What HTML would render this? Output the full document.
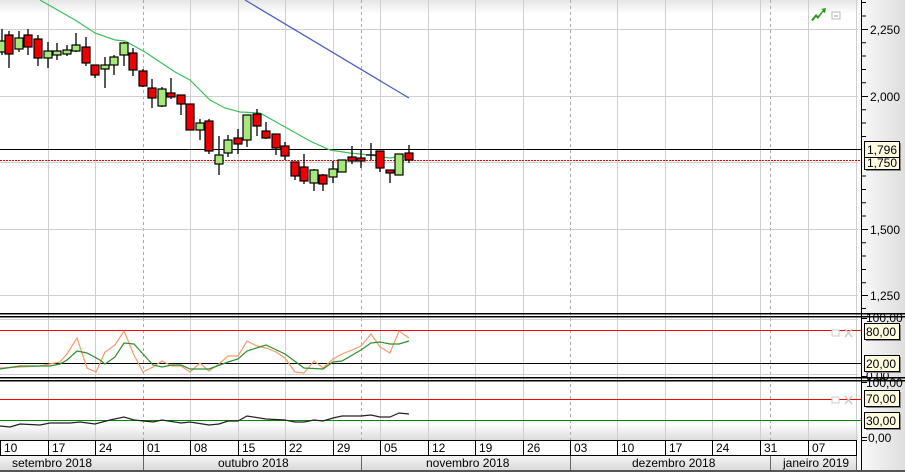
<!DOCTYPE html>
<html><head><meta charset="utf-8"><style>
html,body{margin:0;padding:0;background:#fff;width:905px;height:472px;overflow:hidden}
svg{display:block;font-family:"Liberation Sans",sans-serif}
</style></head><body>
<svg width="905" height="472" viewBox="0 0 905 472" xmlns="http://www.w3.org/2000/svg">
<defs>
<linearGradient id="tg" x1="0" y1="0" x2="0" y2="1"><stop offset="0" stop-color="#e6e6e6"/><stop offset="1" stop-color="#fff"/></linearGradient>
<linearGradient id="bg" x1="0" y1="0" x2="0" y2="1"><stop offset="0" stop-color="#fff"/><stop offset="1" stop-color="#dcdcdc"/></linearGradient>
<linearGradient id="ag" x1="0" y1="0" x2="1" y2="0"><stop offset="0" stop-color="#fafafa"/><stop offset="1" stop-color="#dedede"/></linearGradient>
<linearGradient id="mg" x1="0" y1="0" x2="0" y2="1"><stop offset="0" stop-color="#f4f4f4"/><stop offset="1" stop-color="#dadada"/></linearGradient>
</defs>
<rect x="0" y="0" width="905" height="472" fill="#fff"/>
<rect x="0" y="0" width="858" height="14" fill="url(#tg)"/>
<rect x="0" y="424" width="858" height="16" fill="url(#bg)"/>
<rect x="858" y="0" width="47" height="472" fill="url(#ag)"/>
<g stroke="#cfcfcf" stroke-width="1">
<line x1="48.5" y1="0" x2="48.5" y2="440"/><line x1="95.5" y1="0" x2="95.5" y2="440"/>
<line x1="190.5" y1="0" x2="190.5" y2="440"/><line x1="238.5" y1="0" x2="238.5" y2="440"/>
<line x1="285.5" y1="0" x2="285.5" y2="440"/><line x1="333.5" y1="0" x2="333.5" y2="440"/>
<line x1="380.5" y1="0" x2="380.5" y2="440"/><line x1="428.5" y1="0" x2="428.5" y2="440"/>
<line x1="475.5" y1="0" x2="475.5" y2="440"/><line x1="523.5" y1="0" x2="523.5" y2="440"/>
<line x1="617.5" y1="0" x2="617.5" y2="440"/><line x1="665.5" y1="0" x2="665.5" y2="440"/>
<line x1="712.5" y1="0" x2="712.5" y2="440"/><line x1="760.5" y1="0" x2="760.5" y2="440"/>
<line x1="808.5" y1="0" x2="808.5" y2="440"/><line x1="856.5" y1="0" x2="856.5" y2="440"/>
</g>
<g stroke="#aaa" stroke-width="1" stroke-dasharray="3,3">
<line x1="143.5" y1="0" x2="143.5" y2="440"/><line x1="361.5" y1="0" x2="361.5" y2="440"/>
<line x1="570.5" y1="0" x2="570.5" y2="440"/><line x1="770.5" y1="0" x2="770.5" y2="440"/>
</g>
<g stroke="#cfcfcf" stroke-width="1">
<line x1="0" y1="29.5" x2="858" y2="29.5"/><line x1="0" y1="96.5" x2="858" y2="96.5"/>
<line x1="0" y1="162.5" x2="858" y2="162.5"/><line x1="0" y1="229.5" x2="858" y2="229.5"/>
<line x1="0" y1="295.5" x2="858" y2="295.5"/>
<line x1="0" y1="319.5" x2="858" y2="319.5"/><line x1="0" y1="374.5" x2="858" y2="374.5"/>
</g>
<line x1="0" y1="149.5" x2="862" y2="149.5" stroke="#000"/>
<line x1="0" y1="160.5" x2="862" y2="160.5" stroke="#f00" stroke-dasharray="2,1"/>
<polyline fill="none" stroke="#3cbf5a" stroke-width="1.2" points="40,0 75,20 95,33 115,40 125,41 145,52 160,62 175,72 190,80 210,100 225,108 240,112 260,113 285,127 310,141 330,150 350,153 370,155 390,158 410,155"/>
<polyline fill="none" stroke="#4a5cc0" stroke-width="1.2" points="245,0 409,98"/>
<g stroke="#000" stroke-width="1.3">
<line x1="2" y1="29" x2="2" y2="55"/><line x1="9" y1="31" x2="9" y2="68"/><line x1="19" y1="31" x2="19" y2="52"/><line x1="28" y1="29" x2="28" y2="55"/>
<line x1="38" y1="35" x2="38" y2="66"/><line x1="48" y1="42" x2="48" y2="68"/><line x1="57" y1="43" x2="57" y2="60"/><line x1="67" y1="45" x2="67" y2="56"/>
<line x1="76" y1="33" x2="76" y2="52"/><line x1="86" y1="37" x2="86" y2="66"/><line x1="95" y1="65" x2="95" y2="78"/><line x1="105" y1="57" x2="105" y2="88"/>
<line x1="114" y1="55" x2="114" y2="75"/><line x1="124" y1="42" x2="124" y2="66"/><line x1="133" y1="48" x2="133" y2="76"/><line x1="143" y1="69" x2="143" y2="87"/>
<line x1="152" y1="79" x2="152" y2="108"/><line x1="162" y1="87" x2="162" y2="107"/><line x1="171" y1="78" x2="171" y2="99"/><line x1="181" y1="95" x2="181" y2="115"/>
<line x1="200" y1="119" x2="200" y2="140"/><line x1="209" y1="119" x2="209" y2="154"/><line x1="219" y1="136" x2="219" y2="175"/>
<line x1="228" y1="135" x2="228" y2="157"/><line x1="238" y1="129" x2="238" y2="154"/><line x1="247" y1="115" x2="247" y2="147"/><line x1="257" y1="109" x2="257" y2="136"/>
<line x1="266" y1="122" x2="266" y2="139"/><line x1="276" y1="134" x2="276" y2="155"/><line x1="285" y1="142" x2="285" y2="160"/><line x1="295" y1="162" x2="295" y2="180"/>
<line x1="304" y1="154" x2="304" y2="184"/><line x1="314" y1="169" x2="314" y2="191"/><line x1="323" y1="174" x2="323" y2="191"/><line x1="333" y1="161" x2="333" y2="183"/>
<line x1="352" y1="146" x2="352" y2="164"/><line x1="361" y1="150" x2="361" y2="168"/><line x1="371" y1="143" x2="371" y2="160"/>
<line x1="380" y1="151" x2="380" y2="172"/><line x1="390" y1="170" x2="390" y2="183"/><line x1="409" y1="145" x2="409" y2="163"/>
<line x1="366" y1="155" x2="376" y2="155"/>
</g>
<g stroke="#000" stroke-width="1.2">
<rect x="-2" y="41" width="8" height="11" fill="#a6e87a"/>
<rect x="5" y="35" width="8" height="19" fill="#e00"/>
<rect x="15" y="38" width="8" height="11" fill="#a6e87a"/>
<rect x="24" y="35" width="8" height="12" fill="#e00"/>
<rect x="34" y="39" width="8" height="19" fill="#e00"/>
<rect x="44" y="51" width="8" height="7" fill="#a6e87a"/>
<rect x="53" y="51" width="8" height="4" fill="#a6e87a"/>
<rect x="63" y="50" width="8" height="4" fill="#a6e87a"/>
<rect x="72" y="45" width="8" height="6" fill="#a6e87a"/>
<rect x="82" y="47" width="8" height="16" fill="#e00"/>
<rect x="91" y="65" width="8" height="10" fill="#e00"/>
<rect x="101" y="65" width="8" height="4" fill="#a6e87a"/>
<rect x="110" y="57" width="8" height="8" fill="#a6e87a"/>
<rect x="120" y="43" width="8" height="12" fill="#a6e87a"/>
<rect x="129" y="53" width="8" height="17" fill="#e00"/>
<rect x="139" y="71" width="8" height="15" fill="#e00"/>
<rect x="148" y="88" width="8" height="10" fill="#e00"/>
<rect x="158" y="89" width="8" height="17" fill="#a6e87a"/>
<rect x="167" y="93" width="8" height="4" fill="#e00"/>
<rect x="177" y="95" width="8" height="9" fill="#e00"/>
<rect x="186" y="104" width="8" height="26" fill="#e00"/>
<rect x="196" y="123" width="8" height="7" fill="#a6e87a"/>
<rect x="205" y="121" width="8" height="30" fill="#e00"/>
<rect x="215" y="155" width="8" height="9" fill="#a6e87a"/>
<rect x="224" y="140" width="8" height="13" fill="#a6e87a"/>
<rect x="234" y="138" width="8" height="6" fill="#e00"/>
<rect x="243" y="115" width="8" height="25" fill="#a6e87a"/>
<rect x="253" y="114" width="8" height="12" fill="#e00"/>
<rect x="262" y="131" width="8" height="7" fill="#e00"/>
<rect x="272" y="134" width="8" height="14" fill="#e00"/>
<rect x="281" y="146" width="8" height="10" fill="#e00"/>
<rect x="291" y="162" width="8" height="14" fill="#e00"/>
<rect x="300" y="167" width="8" height="14" fill="#e00"/>
<rect x="310" y="170" width="8" height="13" fill="#a6e87a"/>
<rect x="319" y="175" width="8" height="9" fill="#e00"/>
<rect x="329" y="169" width="8" height="8" fill="#a6e87a"/>
<rect x="338" y="160" width="8" height="12" fill="#a6e87a"/>
<rect x="348" y="157" width="8" height="4" fill="#e00"/>
<rect x="357" y="158" width="8" height="3" fill="#e00"/>
<rect x="376" y="151" width="8" height="17" fill="#e00"/>
<rect x="386" y="170" width="8" height="3" fill="#e00"/>
<rect x="395" y="154" width="8" height="21" fill="#a6e87a"/>
<rect x="405" y="153" width="8" height="7" fill="#e00"/>
</g>
<path d="M811 20 L816 14 L818 16 L823 10 L821 9 L826 8 L825 13 L823 12 L818 19 L816 17 L813 21 Z" fill="#2a9a1a"/>
<rect x="832" y="12" width="8" height="7" fill="#fff" stroke="#bbb"/><rect x="834" y="15" width="4" height="2" fill="#ccc"/>
<rect x="0" y="313" width="905" height="1.5" fill="#000"/><rect x="0" y="316" width="905" height="1.5" fill="#000"/>
<rect x="0" y="377" width="905" height="1.5" fill="#000"/><rect x="0" y="380" width="905" height="1.5" fill="#000"/>
<line x1="0" y1="330.5" x2="862" y2="330.5" stroke="#f00"/>
<line x1="0" y1="363.5" x2="862" y2="363.5" stroke="#000"/>
<polyline fill="none" stroke="#f59a6a" stroke-width="1.2" points="0,368 20,367 40,366 60,362 67,354 77,338 87,368 96,372 105,352 115,345 124,331 134,355 143,372 153,367 162,361 172,366 181,366 190,372 200,363 209,371 219,364 228,356 238,356 247,341 257,346 266,348 276,352 285,358 295,372 304,373 314,361 323,368 333,359 342,354 352,350 361,346 371,334 380,347 390,353 399,331 409,338"/>
<polyline fill="none" stroke="#2f8f2f" stroke-width="1.2" points="0,369 20,366 50,366 60,364 67,360 77,351 87,353 100,360 105,364 115,357 124,343 134,344 143,354 153,365 162,367 172,365 181,365 190,369 209,369 228,362 238,359 247,351 266,345 285,354 304,368 323,369 333,362 342,361 361,350 371,343 380,342 390,344 399,344 409,341"/>
<line x1="0" y1="399.5" x2="862" y2="399.5" stroke="#f00"/>
<line x1="0" y1="420.5" x2="862" y2="420.5" stroke="#080"/>
<polyline fill="none" stroke="#222" stroke-width="1.2" points="0,426 10,427 20,424 40,425 50,423 70,423 80,422 95,424 110,420 124,417 134,420 153,422 162,420 181,423 190,422 209,425 219,424 228,421 238,421 247,416 266,419 285,420 295,422 304,422 314,420 323,421 333,418 342,416 361,416 371,415 380,417 390,417 399,413 409,414"/>
<g fill="#fff" stroke="#ccc"><rect x="832" y="330" width="7" height="6"/><rect x="832" y="397" width="7" height="6"/></g>
<g stroke="#ccc" stroke-width="1.5"><line x1="845" y1="329" x2="852" y2="337"/><line x1="852" y1="329" x2="845" y2="337"/><line x1="845" y1="396" x2="852" y2="404"/><line x1="852" y1="396" x2="845" y2="404"/></g>
<line x1="861.5" y1="0" x2="861.5" y2="472" stroke="#000"/>
<g stroke="#000">
<path d="M862 2.5h4M862 16h4M862 29.5h6M862 42.8h4M862 56h4M862 69.5h4M862 82.8h4M862 96.5h6M862 109.8h4M862 123h4M862 136.5h4M862 176h4M862 189.5h4M862 202.8h4M862 216h4M862 229.5h6M862 242.8h4M862 256h4M862 269.5h4M862 282.8h4M862 295.5h6M862 308.5h4"/>
<path d="M862 318.5h5M862 376.5h5M862 382.5h5M862 437.5h5M862 440.5h5"/>
</g>
<g font-size="12" fill="#000">
<text x="870" y="34">2,250</text><text x="870" y="101">2,000</text><text x="870" y="234">1,500</text><text x="870" y="300">1,250</text>
<text x="866" y="322">100,00</text><text x="866" y="380">0,00</text>
<text x="866" y="387">100,00</text><text x="868" y="442">0,00</text>
</g>
<g fill="#888">
<rect x="866" y="155" width="35" height="16"/><rect x="866" y="143" width="35" height="16"/>
<rect x="866" y="325" width="35" height="16"/><rect x="866" y="357" width="35" height="16"/>
<rect x="866" y="392" width="35" height="16"/><rect x="866" y="414" width="35" height="16"/>
</g>
<rect x="864.5" y="153.5" width="35" height="16" fill="#fffbe0" stroke="#000"/>
<text x="867" y="167" font-size="12">1,750</text>
<rect x="864.5" y="141.5" width="35" height="16" fill="#fffbe0" stroke="#000"/>
<text x="867" y="154" font-size="12">1,796</text>
<g fill="#fffbe0" stroke="#000">
<rect x="864.5" y="323.5" width="35" height="16"/>
<rect x="864.5" y="355.5" width="35" height="16"/>
<rect x="864.5" y="390.5" width="35" height="16"/>
<rect x="864.5" y="412.5" width="35" height="16"/>
</g>
<g font-size="12" fill="#000">
<text x="866" y="336">80,00</text><text x="866" y="368">20,00</text>
<text x="866" y="403">70,00</text><text x="866" y="425">30,00</text>
</g>
<rect x="0" y="440" width="857" height="16" fill="#fff"/>
<line x1="0" y1="440.5" x2="857" y2="440.5" stroke="#000"/>
<line x1="0" y1="455.5" x2="857" y2="455.5" stroke="#000"/>
<g stroke="#000">
<path d="M0.5 440v16M48.5 440v16M95.5 440v16M143.5 440v16M190.5 440v16M238.5 440v16M285.5 440v16M333.5 440v16M380.5 440v16M428.5 440v16M475.5 440v16M523.5 440v16M570.5 440v16M617.5 440v16M665.5 440v16M712.5 440v16M760.5 440v16M808.5 440v16M856.5 440v16"/>
</g>
<g font-size="12" fill="#000">
<text x="4" y="452">10</text><text x="52" y="452">17</text><text x="99" y="452">24</text><text x="147" y="452">01</text>
<text x="194" y="452">08</text><text x="242" y="452">15</text><text x="289" y="452">22</text><text x="337" y="452">29</text>
<text x="384" y="452">05</text><text x="432" y="452">12</text><text x="479" y="452">19</text><text x="527" y="452">26</text>
<text x="574" y="452">03</text><text x="621" y="452">10</text><text x="669" y="452">17</text><text x="716" y="452">24</text>
<text x="764" y="452">31</text><text x="812" y="452">07</text>
</g>
<rect x="0" y="456" width="857" height="14" fill="url(#mg)"/>
<rect x="0" y="470" width="905" height="2" fill="#555"/>
<g stroke="#666"><path d="M143.5 456v14M361.5 456v14M570.5 456v14M770.5 456v14M856.5 456v14"/></g>
<g font-size="12" fill="#000">
<text x="12" y="467">setembro 2018</text><text x="218" y="467">outubro 2018</text>
<text x="426" y="467">novembro 2018</text><text x="632" y="467">dezembro 2018</text>
<text x="783" y="467">janeiro 2019</text>
</g>
</svg>
</body></html>
